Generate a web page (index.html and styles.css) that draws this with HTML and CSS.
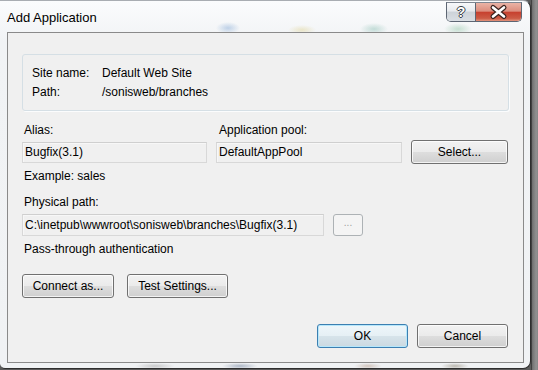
FILE: index.html
```html
<!DOCTYPE html>
<html>
<head>
<meta charset="utf-8">
<link rel="stylesheet" href="styles.css">
</head>
<body>
<div class="screen">
  <div class="window">
    <div class="titlebar">
      <span class="title">Add Application</span>
      <div class="caps">
        <div class="cap help">?</div>
        <div class="cap close">
          <svg width="45" height="18" viewBox="0 0 45 18">
            <path d="M17 4.5 L28 13.5 M28 4.5 L17 13.5" stroke="#3b2420" stroke-width="5" stroke-linecap="round" fill="none"/>
            <path d="M17 4.5 L28 13.5 M28 4.5 L17 13.5" stroke="#ffffff" stroke-width="2.6" stroke-linecap="round" fill="none"/>
          </svg>
        </div>
      </div>
    </div>
    <div class="client">
      <div class="sitebox">
        <div class="kv"><span class="k">Site name:</span><span>Default Web Site</span></div>
        <div class="kv"><span class="k">Path:</span><span>/sonisweb/branches</span></div>
      </div>

      <div class="grid">
        <div class="lbl">Alias:</div>
        <div class="lbl lbl2">Application pool:</div>
        <div></div>
        <div class="input">Bugfix(3.1)</div>
        <div class="input">DefaultAppPool</div>
        <div class="btn select">Select...</div>
      </div>

      <div class="lbl example">Example: sales</div>
      <div class="lbl phys">Physical path:</div>
      <div class="pathrow">
        <div class="input path">C:\inetpub\wwwroot\sonisweb\branches\Bugfix(3.1)</div>
        <div class="btn dots">...</div>
      </div>
      <div class="lbl pass">Pass-through authentication</div>
      <div class="btnrow">
        <div class="btn connect">Connect as...</div>
        <div class="btn test">Test Settings...</div>
      </div>
      <div class="okrow">
        <div class="btn ok">OK</div>
        <div class="btn cancel">Cancel</div>
      </div>
    </div>
  </div>
</div>
</body>
</html>
```
FILE: styles.css
```css
html, body {
  margin: 0;
  padding: 0;
}
body {
  width: 538px;
  height: 370px;
  overflow: hidden;
  font-family: "Liberation Sans", Arial, sans-serif;
  font-size: 12px;
  color: #000;
  background: #5b5b5b;
}
.screen {
  width: 538px;
  height: 370px;
  background:
    linear-gradient(to right, transparent 531px, #2c2c2c 531px, #555 532px, #8d8d8d 533px, #6a6a6a 534px, #9c9c9c 535px, #7b7b7b 536px, #a4a4a4 537px, #6f6f6f 538px);
}
.window {
  width: 530px;
  height: 367px;
  border-top: 1px solid #a9adb2;
  border-right: 1px solid #2e2e2e;
  border-bottom: 1px solid #2e2e2e;
  border-radius: 0 8px 8px 5px;
  background:
    radial-gradient(ellipse 12px 6px at 228px 27px, rgba(90,140,200,.35), transparent),
    radial-gradient(ellipse 14px 5px at 302px 29px, rgba(210,190,90,.3), transparent),
    radial-gradient(ellipse 14px 6px at 374px 28px, rgba(80,160,140,.3), transparent),
    radial-gradient(ellipse 14px 6px at 458px 28px, rgba(90,170,120,.3), transparent),
    radial-gradient(ellipse 20px 3px at 155px 365px, rgba(150,150,150,.45), transparent),
    radial-gradient(ellipse 18px 3px at 240px 365px, rgba(90,110,140,.45), transparent),
    radial-gradient(ellipse 14px 3px at 368px 365px, rgba(170,140,120,.45), transparent),
    radial-gradient(ellipse 14px 3px at 455px 365px, rgba(120,110,90,.45), transparent),
    linear-gradient(#fbfcfd, #f1f3f5 40px, #f0f2f4);
  display: flex;
  flex-direction: column;
}
.titlebar {
  height: 31px;
  display: flex;
  justify-content: space-between;
  align-items: flex-start;
}
.title {
  font-size: 13px;
  line-height: 16px;
  padding: 9px 0 0 7px;
  color: #000;
}
.caps {
  display: flex;
  margin: 1px 8px 0 0;
  height: 18px;
  border: 1px solid #5d6673;
  border-top-color: #7d8590;
  border-radius: 0 0 5px 5px;
  overflow: hidden;
}
.cap {
  height: 18px;
}
.help {
  width: 28px;
  border-right: 1px solid #5d6673;
  background: linear-gradient(#f7f8fa 0%, #e7eaee 45%, #cdd3d9 50%, #d9dee3 100%);
  color: #fff;
  font-weight: bold;
  font-size: 14px;
  line-height: 18px;
  text-align: center;
  text-shadow: -1px 0 #3a3f45, 1px 0 #3a3f45, 0 -1px #3a3f45, 0 1px #3a3f45;
}
.close {
  width: 45px;
  background: linear-gradient(#eab3a6 0%, #dc8e7e 45%, #c7412f 52%, #cc5b45 85%, #e3937c 100%);
}
.close svg {
  display: block;
}
.client {
  margin-left: 7px;
  width: 515px;
  height: 329px;
  border: 1px solid #8a8a8a;
  background: #f0f0f0;
  padding: 0 14px;
  box-sizing: content-box;
  width: 487px;
  display: flex;
  flex-direction: column;
}
.sitebox {
  margin-top: 21px;
  height: 38px;
  padding: 9px 0 8px 9px;
  border: 1px solid #d5dfe5;
  border-radius: 3px;
  box-shadow: 1px 1px 0 #fbfcfd;
  line-height: 19px;
}
.kv {
  display: flex;
}
.k {
  width: 70px;
}
.grid {
  margin-top: 12px;
  display: grid;
  grid-template-columns: 185px 186px 97px;
  grid-template-rows: 15px 24px;
  column-gap: 9px;
  row-gap: 2px;
  align-items: center;
}
.lbl {
  line-height: 15px;
  padding-left: 2px;
}
.lbl2 {
  padding-left: 3px;
}
.input {
  height: 19px;
  line-height: 19px;
  border: 1px solid #d8d8d8;
  border-top-color: #cfcfcf;
  box-shadow: inset 1px 1px 0 #f7f7f7;
  background: #f0f0f0;
  padding-left: 2px;
  white-space: nowrap;
  overflow: hidden;
}
.btn {
  box-sizing: border-box;
  height: 24px;
  line-height: 22px;
  text-align: center;
  border: 1px solid #707070;
  border-radius: 3px;
  background: linear-gradient(#f2f2f2 0%, #ebebeb 48%, #dddddd 52%, #cfcfcf 100%);
  box-shadow: inset 0 0 0 1px rgba(255,255,255,.75);
  white-space: nowrap;
}
.example {
  margin-top: 5px;
}
.phys {
  margin-top: 11px;
}
.pathrow {
  margin-top: 4px;
  display: flex;
  align-items: center;
}
.path {
  width: 298px;
  height: 20px;
  line-height: 20px;
  padding-left: 2px;
}
.dots {
  margin-left: 9px;
  width: 30px;
  height: 22px;
  line-height: 16px;
  border-color: #adb2b5;
  background: #f4f4f4;
  box-shadow: none;
  color: #a0a0a0;
  font-size: 10px;
}
.pass {
  margin-top: 6px;
}
.btnrow {
  margin-top: 17px;
  display: flex;
  gap: 13px;
}
.connect {
  width: 92px;
}
.test {
  width: 101px;
}
.okrow {
  margin-top: 26px;
  display: flex;
  justify-content: flex-end;
  gap: 9px;
  padding-right: 1px;
}
.ok, .cancel {
  width: 91px;
}
.ok {
  border-color: #3c7fb1;
  box-shadow: inset 0 0 0 1px #b6e7fb;
  background: linear-gradient(#eef6fa 0%, #e6f0f5 48%, #d6e3ea 52%, #cbd9e1 100%);
}
```
